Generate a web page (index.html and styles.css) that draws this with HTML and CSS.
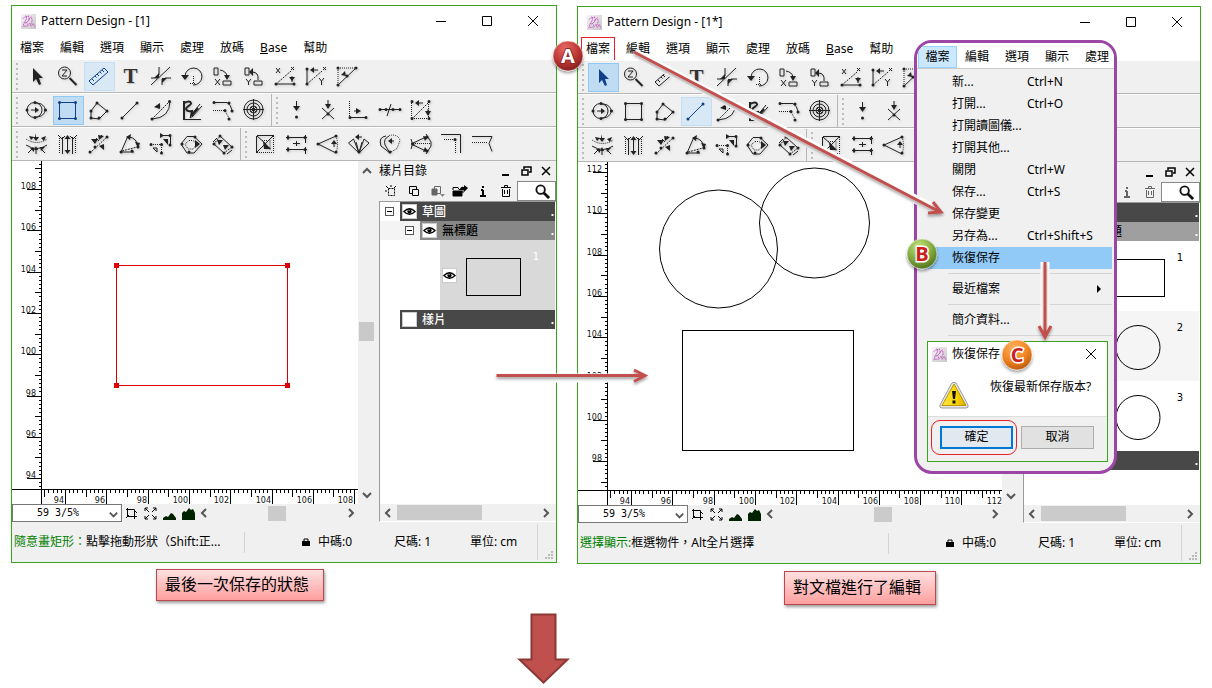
FILE: index.html
```html
<!DOCTYPE html>
<html lang="zh-Hant">
<head>
<meta charset="utf-8">
<title>Pattern Design</title>
<link rel="stylesheet" href="styles.css">
</head>
<body>
<svg class="defs" aria-hidden="true">
  <defs>
    <linearGradient id="g-app" x1="0" y1="0" x2="1" y2="1"><stop offset="0" stop-color="#f6f4f6"/><stop offset="1" stop-color="#c9c6ca"/></linearGradient>
    <radialGradient id="g-red" cx=".4" cy=".25" r=".8"><stop offset="0" stop-color="#e86a64"/><stop offset=".6" stop-color="#b83432"/><stop offset="1" stop-color="#7d1d1c"/></radialGradient>
    <radialGradient id="g-green" cx=".4" cy=".25" r=".8"><stop offset="0" stop-color="#c3e27a"/><stop offset=".6" stop-color="#7da53a"/><stop offset="1" stop-color="#4b6b1c"/></radialGradient>
    <radialGradient id="g-orange" cx=".4" cy=".25" r=".8"><stop offset="0" stop-color="#ffb15c"/><stop offset=".6" stop-color="#f0821f"/><stop offset="1" stop-color="#b4550c"/></radialGradient>
    <linearGradient id="g-warn" x1="0" y1="0" x2="1" y2="0"><stop offset="0" stop-color="#ffe84a"/><stop offset=".6" stop-color="#fbd500"/><stop offset="1" stop-color="#d9a800"/></linearGradient>
    <filter id="soft" x="-30%" y="-30%" width="160%" height="170%"><feDropShadow dx="0" dy="2" stdDeviation="1.5" flood-opacity=".4"/></filter>
  </defs>
  <symbol id="app" viewBox="0 0 16 16"><rect width="16" height="16" fill="url(#g-app)"/><path d="M2 5l3-3 1 3-3 5-1 4M5 3l3-1 1 4-3 3 2 4M4 10l3-2M8 6l3-3 1 4-2 5M9 10l2 3 2-3 2 4M3 13h4" stroke="#c653c4" fill="none" stroke-dasharray="2 .7"/></symbol>

  <symbol id="cursor" viewBox="0 0 24 24"><path class="f" d="M8 4v14l3-3 3 6 2-1-2-6h4z"/></symbol>
  <symbol id="zoom" viewBox="0 0 24 24"><circle cx="8.500" cy="9" r="6"/><path d="M6 6h5l-5 6h5"/><path class="w" d="M13.500 14l7 7"/></symbol>
  <symbol id="ruler" viewBox="0 0 24 24"><path d="M2 17L17 4l4 4L6 21zM5 15l2 2M8 12l1.500 1.500M10 10l2 2M13 8l1.500 1.500M15 6l2 2"/></symbol>
  <symbol id="cross" viewBox="0 0 24 24"><path d="M2 21L21 3M2 14h6M10 3v8M13 21v-6M16 14h6"/><path class="f" d="M5 14l5-5v5zM13 19v-5h5z"/></symbol>
  <symbol id="rotate" viewBox="0 0 24 24"><path d="M5 12a8.500 8.500 0 1 1 8 9"/><path class="f" d="M1 11h8l-4 5z"/><path class="d" d="M13.500 12v8M10 19.500h5"/></symbol>
  <symbol id="movex" viewBox="0 0 24 24"><path d="M3 4h4v7H3zM12 17h8v4h-8zM9 6q6 1 7 6"/><path class="f" d="M13 11h6l-3 5z"/><path d="M4 15l5 6M9 15l-5 6"/></symbol>
  <symbol id="movey" viewBox="0 0 24 24"><path d="M3 4h4v7H3zM12 17h8v4h-8zM16 16q1-8-6-8"/><path class="f" d="M7 8l4-4v8z"/><path d="M4 15l2.500 3 2.500-3M6.500 18v3"/></symbol>
  <symbol id="measx" viewBox="0 0 24 24"><path d="M3 20h18M19 12v6M3 4l4 5M7 4l-4 5M18 3l3 3M21 3l-3 3"/><path class="f" d="M16 13h6l-3 4z"/><path class="d2" d="M3 20L18 7"/><path class="p" d="M3 20h0M21 20h0"/></symbol>
  <symbol id="measy" viewBox="0 0 24 24"><path d="M3 5v15M15 14l2.500 3 2.500-3M17.500 17v4M8 6h6M19 3l3 3M22 3l-3 3"/><path class="f" d="M6 6l4-3v6z"/><path class="d2" d="M3 20L18 7"/><path class="p" d="M3 5h0M3 20h0"/></symbol>
  <symbol id="measd" viewBox="0 0 24 24"><path d="M3 21L21 4"/><path class="d" d="M3 4h18M3 4v17"/><path class="f" d="M11 12l-5-1 4-4z"/><path class="p" d="M3 4h0M21 4h0M3 21h0M12 12h0"/></symbol>

  <symbol id="ellipse" viewBox="0 0 24 24"><circle cx="9.500" cy="12" r="7.500"/><path d="M11 5c12 0 12 14 0 14M6 12h6"/><path class="f" d="M10 9l4 3-4 3z"/><path class="p" d="M2 12h0M10 4.500h0M10 19.500h0M20.500 12h0"/></symbol>
  <symbol id="rect" viewBox="0 0 24 24"><path d="M3.500 4.500h16v16h-16z"/><path class="p" d="M3.500 4.500h0M19.500 4.500h0M19.500 20.500h0M3.500 20.500h0"/></symbol>
  <symbol id="poly" viewBox="0 0 24 24"><path d="M10 5l10 8-8 8-8-1v-7z"/><path class="p" d="M10 5h0M20 13h0M12 20h0M4 20h0M4 13h0"/></symbol>
  <symbol id="line" viewBox="0 0 24 24"><path d="M4 20L19 5"/><path class="p" d="M4 20h0M19 5h0"/></symbol>
  <symbol id="curve" viewBox="0 0 24 24"><path d="M3 21q18-1 18-18"/><path class="d2" d="M3 21L20 4"/><path class="f" d="M5 9l6-4v6z"/><path class="p" d="M3 21h0M20.500 3.500h0"/></symbol>
  <symbol id="pen" viewBox="0 0 24 24"><path class="w" d="M4 3v18"/><path d="M3 21.500h18"/><path class="w" d="M4 5q6-3 7 0c1 2-5 3-5 6q1 3 6 2l-1 5"/><path d="M20 6l-9 11M22 8L12 19M10 20l1-3 2 1z"/><path class="w" d="M18 10l-6 7"/></symbol>
  <symbol id="arc" viewBox="0 0 24 24"><path d="M3 4.500h13q4 2 5 8"/><path class="d" d="M2 12.500h12M14 13l4 7"/><path class="p" d="M3 4.500h0M18 5h0M21 13h0M14 12.500h0M18 21h0"/></symbol>
  <symbol id="target" viewBox="0 0 24 24"><circle cx="11.500" cy="11.500" r="9.500"/><circle cx="11.500" cy="11.500" r="6.500"/><circle cx="11.500" cy="11.500" r="3.500"/><path d="M11.500 1v21M1 11.500h21M9 9l5 5M14 9l-5 5"/></symbol>
  <symbol id="point" viewBox="0 0 24 24"><path d="M11.500 3v7"/><path class="f" d="M8 8h7l-3.500 5z"/><path class="p" d="M11.500 19h0"/></symbol>
  <symbol id="pointx" viewBox="0 0 24 24"><path d="M12 2v6M6 10l12 11M18 10L6 21"/><path class="f" d="M9 6h6l-3 5z"/><path class="p" d="M12 16h0"/></symbol>
  <symbol id="perp" viewBox="0 0 24 24"><path d="M3 19.500h17M7 13h4"/><path class="d" d="M2.500 3v16"/><path class="f" d="M9 10l5 3-5 3z"/><path class="p" d="M3 19.500h0M19 19.500h0"/></symbol>
  <symbol id="divide" viewBox="0 0 24 24"><path d="M2 11.500h20M9 18l4-12"/><path class="p" d="M2 11.500h0M8 11.500h0M15 11.500h0M22 11.500h0"/></symbol>
  <symbol id="align" viewBox="0 0 24 24"><path class="d" d="M2.500 3v17.500h17V4"/><path class="d2" d="M3 21L20 4"/><path d="M8 5h6M19 11v5"/><path class="f" d="M6 5l4-3v6zM16 13h6l-3 5z"/><path class="p" d="M3 3.500h0M20 3.500h0M3 20.500h0M20 20.500h0"/></symbol>

  <symbol id="seam" viewBox="0 0 24 24"><path d="M1 13q11 7 21 0M3 21l5-5M11 22v-6M20 21l-4-4"/><path class="d" d="M1 7q11 7 21 0"/><path class="f" d="M4 4l5 1-3 3zM11 1v4h3l-3 4-3-4h2zM21 4l-5 2 3 3zM5 16h4v4zM9 18h4l-2-4zM15 15h5l-4 4z"/></symbol>
  <symbol id="parallel" viewBox="0 0 24 24"><path d="M6.500 5v17M16.500 5v17M11.500 5v15M2 3l4 4M6 7l3-3M21 3l-4 4M17 7l-3-3"/><path class="f" d="M8.500 7l3-4 3 4zM8.500 18l3 4 3-4z"/><path class="d" d="M3.500 6v16M19.500 6v16"/></symbol>
  <symbol id="scatter" viewBox="0 0 24 24"><path class="d2" d="M3 21L21 4"/><path d="M9 6l3 3M14 3l2 2"/><path class="f" d="M4 7h7l-3 5zM11 3l6 1-5 4zM12 14l5-2v6z"/><path class="p" d="M3 20h0M8 15h0M20 5h0"/></symbol>
  <symbol id="angle" viewBox="0 0 24 24"><path d="M10 4L3 20h13M11 5q8 1 9 10"/><path class="d2" d="M4 19l15-4"/><path class="f" d="M8 5l5-3-1 6zM17 10l5 1-2 5z"/><path class="p" d="M3 20h0M20 15h0M14 19h0"/></symbol>
  <symbol id="steps" viewBox="0 0 24 24"><path d="M11 3.500h10.500V13"/><path class="d" d="M2 12.500h11M12.500 13v8"/><path class="f" d="M14 7h5v6zM11 1l4 2.500L11 6z"/><path d="M4 16h4v4z"/><path class="p" d="M2 12.500h0M12.500 12.500h0M21 3.500h0M12.500 21h0M21 13h0"/></symbol>
  <symbol id="offset" viewBox="0 0 24 24"><path d="M7 4.500h7l8 7.500-8 9H7l-6-9z"/><path class="d" d="M9 8.500h4l4 3.500-4 5H8l-3-5z"/><path class="f" d="M15 8l5 4-5 4z"/><path class="p" d="M9 20h0M15 5h0M2 12h0"/></symbol>
  <symbol id="band" viewBox="0 0 24 24"><path d="M9 4l12 11M3 12l10 9M6 6l-4 4M21 18l-5 4"/><path class="d2" d="M9 4l-6 8M21 15l-8 6"/><path class="f" d="M6 8l6 0-4 5zM12 13h6l-4 5z"/><path class="p" d="M9 4h0M21 15h0M3 12h0M13 21h0"/></symbol>
  <symbol id="boxcut" viewBox="0 0 24 24"><path d="M3 3.500h16M3 20L20 3M3 4l9 8M2.500 4v17"/><path class="d" d="M3 20.500h16.500V4M8 8.500h8V18"/><path class="f" d="M9 9l8 8h-7z"/></symbol>
  <symbol id="widen" viewBox="0 0 24 24"><path d="M1 5.500h21M1 17.500h21M3 3v5M20.500 3v8M3 15v5M20.500 15v7M8 11.500h7M11.500 9v5"/><path class="p" d="M3 5.500h0M20 5.500h0M3 17.500h0M20 17.500h0"/></symbol>
  <symbol id="dart" viewBox="0 0 24 24"><path d="M2 12L20 4M2 12l18 9M18 9v6"/><path class="d" d="M20 4q3 8 0 17"/><path class="f" d="M15 12l3-4 3 4z"/><path class="p" d="M2 12h0M20 4h0M20 20h0"/></symbol>
  <symbol id="fan" viewBox="0 0 24 24"><path d="M12 21L1.500 11l5-4zM12 21l10-10-5-4zM9 10l3 11 3-11M10 5h5"/><path class="f" d="M8 5l4-3v6z"/><path class="p" d="M12 20h0"/></symbol>
  <symbol id="pleat" viewBox="0 0 24 24"><path d="M12 21L3 14q-3-9 5-10M12 21L7 13q-2-6 4-9M12 9h4"/><path class="d" d="M11 3.500q9-2 11 5l-3 8-7 4"/><path class="f" d="M10 9l4-3v6z"/><path class="p" d="M12 20h0"/></symbol>
  <symbol id="spread" viewBox="0 0 24 24"><path d="M2 12L17 5M2 12l15 7M2 7q3 5 0 10M17 2l5 8v4l-5 8"/><path class="d" d="M2 11.500h19"/><path class="f" d="M14 4l5 1-3 4zM14 20l5-1-3-4z"/><path class="p" d="M18 5h0M18 19h0M4 12h0"/></symbol>
  <symbol id="corner" viewBox="0 0 24 24"><path d="M1 2.500h19.500V21"/><path class="d" d="M4 7.500h11.500V21"/><path class="p" d="M15 7.500h0"/></symbol>
  <symbol id="notch" viewBox="0 0 24 24"><path d="M1 4.500h20l-3 7 3 8"/><path class="d" d="M1 10.500h15"/></symbol>

  <symbol id="eye" viewBox="0 0 14 14"><path d="M1 7q6-6 12 0q-6 6-12 0z" fill="#fff" stroke="#000" stroke-width="1.400"/><circle cx="7" cy="7" r="2.300" fill="#000"/><path d="M6 6h1" stroke="#fff"/></symbol>
  <symbol id="lens" viewBox="0 0 16 16"><circle cx="6" cy="6" r="4.500" fill="none" stroke="#111" stroke-width="2"/><path d="M9 9l6 6" stroke="#111" stroke-width="3"/></symbol>
  <symbol id="close" viewBox="0 0 12 12"><path d="M1 1l10 10M11 1L1 11"/></symbol>
  <symbol id="chev" viewBox="0 0 12 12"><path d="M8 2L4 6l4 4" stroke-width="2"/></symbol>
</svg>

<main class="stage">
  <div class="pair">
    <div class="column">
      <section class="window" aria-label="Pattern Design - [1]">
        <header class="titlebar">
          <svg class="app-icon"><use href="#app"/></svg><h1>Pattern Design - [1]</h1>
          <div class="win-controls">
            <button aria-label="最小化"><svg viewBox="0 0 12 12"><path d="M1 6.500h10"/></svg></button>
            <button aria-label="最大化"><svg viewBox="0 0 12 12"><path d="M1.500 1.500h9v9h-9z"/></svg></button>
            <button aria-label="關閉"><svg><use href="#close"/></svg></button>
          </div>
        </header>
        <nav class="menubar"><button>檔案</button><button>編輯</button><button>選項</button><button>顯示</button><button>處理</button><button>放碼</button><button><u>B</u>ase</button><button>幫助</button></nav>
        <div class="toolbars" data-soft="ruler" data-on="rect"></div>
        <div class="body">
          <div class="work">
            <svg class="canvas" data-vbase="28" data-vvalue="108" data-hvalue="94">
              <g stroke="#d90000" fill="none"><rect x="104.500" y="104.500" width="171" height="120"/></g>
              <g fill="#e00000"><rect x="102" y="102" width="5" height="5"/><rect x="273" y="102" width="5" height="5"/><rect x="102" y="222" width="5" height="5"/><rect x="273" y="222" width="5" height="5"/></g>
            </svg>
            <div class="vscroll"><svg class="up"><use href="#chev"/></svg><div class="track"><i></i></div><svg class="down"><use href="#chev"/></svg></div>
            <div class="viewbar" data-thumb="43"></div>
          </div>
          <aside class="panel">
            <div class="panel-title"><h2>樣片目錄</h2><span class="panel-controls"></span></div>
            <div class="panel-tools"></div>
            <div class="tree">
              <div class="row dark"><span class="fold"></span><div class="bar"><svg class="eye"><use href="#eye"/></svg><b>草圖</b><i>.</i></div></div>
              <div class="row mid indent"><span class="fold"></span><div class="bar"><svg class="eye"><use href="#eye"/></svg><b>無標題</b><i>.</i></div></div>
              <div class="item picked"><svg class="eye"><use href="#eye"/></svg><svg class="thumb" viewBox="0 0 56 48"><rect x=".5" y="5.500" width="54" height="37"/></svg><span>1</span></div>
              <div class="row dark"><span class="nofold"></span><div class="bar"><span class="eye"></span><b>樣片</b><i>.</i></div></div>
            </div>
            <div class="hscroll"><svg><use href="#chev"/></svg><div class="track"><i class="wide"></i></div><svg class="flip"><use href="#chev"/></svg></div>
          </aside>
        </div>
        <footer class="status">
          <p><em>隨意畫矩形：</em>點擊拖動形狀（Shift:正...</p>
          <div class="cells"><svg class="lock" viewBox="0 0 8 8"><path d="M0 3h8v5H0z"/><path d="M2 4V1h4v3" fill="none" stroke="#000"/></svg><span>中碼:0</span><span>尺碼: 1</span><span>單位: cm</span><i class="size-grip"></i></div>
        </footer>
      </section>
      <p class="caption first">最後一次保存的狀態</p>
    </div>

    <div class="column second">
      <section class="window" aria-label="Pattern Design - [1*]">
        <header class="titlebar">
          <svg class="app-icon"><use href="#app"/></svg><h1>Pattern Design - [1*]</h1>
          <div class="win-controls">
            <button aria-label="最小化"><svg viewBox="0 0 12 12"><path d="M1 6.500h10"/></svg></button>
            <button aria-label="最大化"><svg viewBox="0 0 12 12"><path d="M1.500 1.500h9v9h-9z"/></svg></button>
            <button aria-label="關閉"><svg><use href="#close"/></svg></button>
          </div>
        </header>
        <nav class="menubar"><button class="ringed">檔案</button><button>編輯</button><button>選項</button><button>顯示</button><button>處理</button><button>放碼</button><button><u>B</u>ase</button><button>幫助</button></nav>
        <div class="toolbars" data-soft="line" data-on="cursor"></div>
        <div class="body">
          <div class="work">
            <svg class="canvas" data-vbase="10" data-vvalue="112" data-hvalue="94">
              <g stroke="#000" fill="none"><rect x="104.500" y="168.500" width="171" height="120"/><circle cx="140.500" cy="87" r="59"/><circle cx="236.500" cy="61" r="55"/></g>
            </svg>
            <div class="vscroll"><svg class="up"><use href="#chev"/></svg><div class="track"><i></i></div><svg class="down"><use href="#chev"/></svg></div>
            <div class="viewbar" data-thumb="46"></div>
          </div>
          <aside class="panel faded">
            <div class="panel-title"><h2>樣片目錄</h2><span class="panel-controls"></span></div>
            <div class="panel-tools"></div>
            <div class="tree">
              <div class="row dark"><span class="fold"></span><div class="bar"><svg class="eye"><use href="#eye"/></svg><b>草圖</b><i>.</i></div></div>
              <div class="row mid indent"><span class="fold"></span><div class="bar"><svg class="eye"><use href="#eye"/></svg><b>無標題</b><i>.</i></div></div>
              <div class="item"><svg class="eye"><use href="#eye"/></svg><svg class="thumb" viewBox="0 0 56 48"><rect x=".5" y="5.500" width="54" height="37"/></svg><span>1</span></div>
              <div class="item even"><svg class="eye"><use href="#eye"/></svg><svg class="thumb" viewBox="0 0 56 48"><circle cx="28" cy="23.500" r="22"/></svg><span>2</span></div>
              <div class="item"><svg class="eye"><use href="#eye"/></svg><svg class="thumb" viewBox="0 0 56 48"><circle cx="28" cy="23.500" r="22"/></svg><span>3</span></div>
              <div class="row dark"><span class="nofold"></span><div class="bar"><span class="eye"></span><b>樣片</b><i>.</i></div></div>
            </div>
            <div class="hscroll"><svg><use href="#chev"/></svg><div class="track"><i class="wide"></i></div><svg class="flip"><use href="#chev"/></svg></div>
          </aside>
        </div>
        <footer class="status">
          <p><em>選擇顯示:</em>框選物件，Alt全片選擇</p>
          <div class="cells"><svg class="lock" viewBox="0 0 8 8"><path d="M0 3h8v5H0z"/><path d="M2 4V1h4v3" fill="none" stroke="#000"/></svg><span>中碼:0</span><span>尺碼: 1</span><span>單位: cm</span><i class="size-grip"></i></div>
        </footer>

        <div class="popup">
          <nav class="popup-bar"><button class="open">檔案</button><button>編輯</button><button>選項</button><button>顯示</button><button>處理</button></nav>
          <ul class="menu">
            <li><button><span>新...</span><kbd>Ctrl+N</kbd></button></li>
            <li><button><span>打開...</span><kbd>Ctrl+O</kbd></button></li>
            <li><button><span>打開讀圖儀...</span></button></li>
            <li><button><span>打開其他...</span></button></li>
            <li><button><span>關閉</span><kbd>Ctrl+W</kbd></button></li>
            <li><button><span>保存...</span><kbd>Ctrl+S</kbd></button></li>
            <li><button><span>保存變更</span></button></li>
            <li><button><span>另存為...</span><kbd>Ctrl+Shift+S</kbd></button></li>
            <li><button class="hot"><span>恢復保存</span></button></li>
            <li class="rule"></li>
            <li><button><span>最近檔案</span><svg class="more" viewBox="0 0 4 8"><path d="M0 0l4 4-4 4z"/></svg></button></li>
            <li class="rule"></li>
            <li><button><span>簡介資料...</span></button></li>
            <li class="rule"></li>
          </ul>
          <div class="dialog" role="dialog" aria-label="恢復保存">
            <header><svg class="app-icon"><use href="#app"/></svg><h2>恢復保存</h2><button aria-label="關閉"><svg><use href="#close"/></svg></button></header>
            <div class="message">
              <svg class="warn" viewBox="0 0 32 30"><path d="M15 2.500h2q1 0 2 2L30 25q1 3-2 3H4q-3 0-2-3L13 4.500q1-2 2-2z" fill="#e8e8e8" stroke="#9a9a9a"/><path d="M16 4l12 21.500H4z" fill="url(#g-warn)" stroke="#b89500"/><path d="M14 11h4l-1 8h-2zM14.500 20.500h3v3h-3z" fill="#111"/></svg>
              <p>恢復最新保存版本?</p>
            </div>
            <div class="actions"><span class="ring"><button class="primary">確定</button></span><button>取消</button></div>
          </div>
        </div>
      </section>
      <p class="caption last">對文檔進行了編輯</p>
    </div>
  </div>
  <svg class="down-arrow" viewBox="0 0 54 72" aria-hidden="true"><path d="M14.500 1.500h24v45h12L26.500 69.500 2.500 46.500h12z" fill="#c0504d" stroke="#8c3836" stroke-width="2"/></svg>

  <svg class="notes">
    <g fill="none" stroke="#fff" stroke-width="9"><path d="M496 378h151"/><path d="M634 53l304 158"/><path d="M1045 262v70"/></g>
    <g fill="none" stroke="#c0504d" stroke-width="3" filter="url(#soft)">
      <path d="M496.500 375.500h148M634 370l11 5.500-11 6"/>
      <path d="M634 52l306 160M928 213l13-1-8-10"/>
      <path d="M1045 262v74M1039 326l6 11 6-11"/>
    </g>
    <g class="badge" filter="url(#soft)">
      <circle cx="568" cy="56" r="15" fill="url(#g-red)"/><circle cx="922" cy="254" r="15" fill="url(#g-green)"/><circle cx="1017" cy="355" r="15" fill="url(#g-orange)"/>
    </g>
    <g class="badge-text"><text x="568" y="63" class="light">A</text><text x="922" y="261">B</text><text x="1017" y="362">C</text></g>
  </svg>
</main>
<script src="app.js"></script>
</body>
</html>
```
FILE: styles.css
```css
* { box-sizing: border-box; }
body {
  margin: 0;
  background: #fff;
  color: #000;
  font: 12px/18px "Noto Sans", "Noto Sans CJK TC", sans-serif;
}
h1, h2, p, ul { margin: 0; padding: 0; font-size: 12px; font-weight: 400; }
button { border: 0; background: none; padding: 0; margin: 0; color: inherit; font: inherit; }
svg { display: block; fill: none; stroke: none; }
.defs { position: absolute; width: 0; height: 0; }

.stage { position: relative; padding: 5px 11px 0; }
.pair { display: grid; grid-template-columns: 546fr 624fr; gap: 20px; align-items: start; }
.second { padding-top: 1px; }
.window {
  position: relative;
  display: flex;
  flex-direction: column;
  border: 1px solid #3aa51c;
  background: #f0f0f0;
}

.titlebar { display: flex; align-items: center; height: 30px; padding-left: 9px; background: #fff; }
.app-icon { width: 15px; height: 15px; margin-right: 5px; }
.titlebar h1 { flex: 1; }
.win-controls { display: flex; }
.win-controls button { width: 46px; height: 28px; display: grid; place-items: center; }
.win-controls svg { width: 12px; height: 12px; stroke: #000; }
.menubar { display: flex; gap: 16px; height: 23px; padding: 0 8px; align-items: center; background: #fff; }
.ringed { outline: 1px solid #e8202a; outline-offset: 2px; margin: 0 -2px; padding: 0 2px; }

.toolrow { display: flex; height: 34px; border-top: 1px solid #fff; border-bottom: 1px solid #b6b6b6; overflow: hidden; }
.toolgroup { display: flex; align-items: center; padding-right: 1px; }
.toolgroup + .toolgroup { border-left: 1px solid #b6b6b6; }
.grip {
  width: 2px;
  height: 27px;
  margin: 0 4px;
  background: linear-gradient(#bdbdbd, #bdbdbd) 0 0 / 2px 2px;
  background: repeating-linear-gradient(#bdbdbd 0 2px, transparent 2px 5px);
}
.tool { flex: none; width: 31px; height: 29px; display: grid; place-items: center; border: 1px solid transparent; }
.tool svg { width: 24px; height: 24px; margin: 0 1px 1px 0; stroke: #222; color: #222; filter: drop-shadow(1px 1px 1px #c4c4c4); }
.tool.soft { background: #d9e8f5; border-color: #c3def5; }
.tool.on { background: #c0dcf3; border-color: #90c8f6; }
.tool.soft svg, .tool.on svg { stroke: #123f8c; color: #123f8c; filter: none; }
.f { fill: currentColor; stroke: none; }
.w { stroke-width: 2; }
.d { stroke-dasharray: 1 1; }
.d2 { stroke-dasharray: 2 1; }
.p { stroke-width: 3; stroke-linecap: round; }
.letter { font: 700 21px/24px "Liberation Serif", serif; color: #333; text-shadow: 1px 1px 1px #c4c4c4; }

.body { display: flex; }
.work { flex: 1; min-width: 0; display: grid; grid-template: minmax(343px, 1fr) 18px / minmax(0, 1fr) 17px; }
.canvas { width: 100%; height: 100%; background: #fff; }
.ticks { stroke: #000; shape-rendering: crispEdges; }
.nums { font: 8px "DejaVu Sans", sans-serif; fill: #111; text-anchor: end; }
.vscroll { display: flex; flex-direction: column; align-items: center; padding: 4px 0 3px; }
.vscroll svg, .hscroll svg { width: 12px; height: 12px; stroke: #555; flex: none; }
.vscroll .up { transform: rotate(90deg); }
.vscroll .down { transform: rotate(-90deg); }
.vscroll .track { flex: 1; width: 15px; }
.vscroll i { display: block; height: 19px; margin-top: 145px; background: #c9c9c9; }
.viewbar { grid-column: 1 / 3; display: flex; align-items: center; padding-right: 18px; }
.viewbar .combo { position: relative; width: 110px; height: 18px; }
.combo select {
  appearance: none;
  display: block;
  width: 100%;
  height: 18px;
  padding: 0 0 0 24px;
  border: 1px solid #777;
  border-radius: 0;
  background: #fff;
  color: #000;
  font: 10px/16px "DejaVu Sans Mono", monospace;
}
.combo svg { position: absolute; right: 3px; top: 5px; width: 11px; height: 11px; stroke: #555; transform: rotate(-90deg); }
.view-icon { width: 19px; height: 14px; display: grid; place-items: center; }
.view-icon svg { width: 13px; height: 13px; stroke: #000; }
.hscroll { flex: 1; display: flex; align-items: center; height: 17px; }
.hscroll .track { flex: 1; height: 15px; margin: 0 3px; }
.hscroll i { display: block; width: 18px; height: 15px; background: #cbcbcb; }
.hscroll i.wide { width: 85px; }
.flip { transform: rotate(180deg); }

.panel { flex: none; width: 181px; display: flex; flex-direction: column; padding-left: 4px; }
.panel-title { display: flex; align-items: center; justify-content: space-between; height: 20px; padding-right: 4px; }
.panel-controls { display: flex; gap: 8px; }
.panel-controls button { width: 12px; height: 12px; }
.panel-controls svg { width: 12px; height: 12px; stroke: #000; stroke-width: 2; }
.panel-tools { display: flex; align-items: center; height: 20px; padding-left: 1px; }
.panel-tools button { width: 23px; display: grid; place-items: center; }
.panel-tools svg { width: 16px; height: 12px; stroke: #000; }
.faded .panel-tools button svg { stroke: #666; }
.search { margin-left: auto; width: 39px; height: 20px; display: flex; align-items: center; border: 1px solid #888; background: #fff; }
.search input { width: 17px; height: 16px; padding: 0; border: 0; background: none; outline: 0; }
.panel-tools .search svg { width: 15px; height: 15px; }
.tree { flex: 1; border-top: 1px solid #999; border-left: 1px solid #999; padding-right: 1px; background: #fff; }
.row { display: flex; align-items: center; height: 19px; }
.indent { padding-left: 20px; background: #f4f4f4; }
.fold { width: 9px; height: 9px; margin: 0 6px 0 5px; border: 1px solid #555; background: linear-gradient(#000, #000) center / 5px 1px no-repeat #fff; }
.nofold { width: 20px; }
.bar { flex: 1; display: flex; align-items: center; height: 19px; padding-left: 2px; }
.bar b { flex: 1; margin-left: 5px; font-weight: 500; }
.bar i { margin-right: 1px; font-style: normal; font-weight: 700; color: #fff; }
.dark .bar { background: #484848; color: #fff; }
.mid .bar { background: #888; }
.faded .mid .bar { background: #9f9f9f; }
.eye { flex: none; width: 15px; height: 15px; background: #fff; border: 1px solid #ccc; }
.item { display: flex; align-items: center; height: 70px; margin-left: 60px; padding: 0 16px 0 2px; }
.picked { background: #d9d9d9; color: #fff; }
.even { background: #f5f5f5; }
.thumb { width: 56px; height: 48px; margin: 4px 0 0 9px; stroke: #000; }
.item span { margin: 0 0 36px auto; font: 10px/14px "DejaVu Sans", sans-serif; }
.panel .hscroll { flex: none; border-left: 1px solid #999; height: 18px; padding: 0 4px 0 2px; border-bottom: 1px solid #fff; }

.status { display: flex; align-items: center; height: 40px; }
.status p { flex: 1; padding-left: 2px; white-space: nowrap; overflow: hidden; font-family: "Noto Sans", "Noto Sans CJK SC", sans-serif; }
.status em { color: #008000; font-style: normal; }
.cells { display: flex; align-items: center; width: 312px; height: 21px; padding-left: 57px; border-left: 1px solid #d4d4d4; }
.cells span { width: 76px; white-space: nowrap; }
.cells span:nth-of-type(3) { width: 67px; }
.lock { width: 8px; height: 8px; margin-right: 8px; fill: #000; }
.size-grip {
  width: 19px;
  height: 36px;
  border-left: 1px solid #d4d4d4;
  background:
    linear-gradient(#bbb, #bbb) 7px 33px / 2px 2px no-repeat,
    linear-gradient(#bbb, #bbb) 10px 33px / 2px 2px no-repeat,
    linear-gradient(#bbb, #bbb) 13px 33px / 2px 2px no-repeat,
    linear-gradient(#bbb, #bbb) 10px 30px / 2px 2px no-repeat,
    linear-gradient(#bbb, #bbb) 13px 30px / 2px 2px no-repeat,
    linear-gradient(#bbb, #bbb) 13px 27px / 2px 2px no-repeat;
}

.caption {
  width: max-content;
  padding: 0 14px 4px 8px;
  border: 1px solid #b9474b;
  background: linear-gradient(#ffe0e0, #ff9f9f);
  box-shadow: 1px 2px 3px rgba(0, 0, 0, .4);
  font: 16px/26px "Noto Sans CJK TC", sans-serif;
}
.first { margin: 6px 0 0 145px; }
.last { margin: 7px 0 0 207px; line-height: 28px; }
.down-arrow { width: 54px; height: 72px; margin: 8px 0 0 506px; }

.popup {
  position: absolute;
  top: 33px;
  right: 83px;
  width: 203px;
  padding-bottom: 9px;
  overflow: hidden;
  border: 3px solid #9b45a5;
  border-radius: 18px;
  background: #f0f0f0;
}
.popup-bar { display: flex; height: 26px; padding: 3px 0 0 1px; border-bottom: 1px solid #ccc; background: #fff; }
.popup-bar button { flex: none; width: 40px; height: 22px; line-height: 20px; }
.popup-bar .open { width: 39px; border: 1px solid #99d1ff; background: #cce8ff; }
.menu { list-style: none; padding: 2px 2px 0 2px; }
.menu button { display: grid; grid-template-columns: 75px 1fr; align-items: center; width: 100%; height: 22px; padding-left: 33px; text-align: left; white-space: nowrap; }
.menu kbd { font: inherit; }
.menu .hot { background: #91c9f7; }
.more { width: 4px; height: 8px; fill: #000; justify-self: end; margin-right: 11px; }
.rule { height: 1px; margin: 4px 0 4px 29px; background: #d4d4d4; }
.dialog { width: 181px; margin: 5px 0 0 10px; border: 1px solid #3aa51c; background: #fff; }
.dialog header { display: flex; align-items: center; height: 24px; padding: 0 10px 0 4px; }
.dialog h2 { flex: 1; }
.dialog header button svg { width: 12px; height: 12px; stroke: #000; }
.message { display: flex; height: 50px; padding-left: 10px; }
.warn { width: 32px; height: 30px; margin-top: 14px; }
.message p { margin: 12px 0 0 20px; }
.actions { display: flex; align-items: center; gap: 4px; height: 45px; padding: 0 0 4px 3px; border-top: 1px solid #dfdfdf; background: #f0f0f0; }
.ring { padding: 5px 3px 5px 8px; border: 1px solid #e8202a; border-radius: 9px; }
.actions button { display: block; width: 73px; height: 23px; border: 1px solid #adadad; background: #e1e1e1; line-height: 20px; }
.actions .primary { border: 2px solid #0078d7; background: #e1e8f0; line-height: 18px; }

.notes { position: absolute; inset: 0; width: 100%; height: 100%; pointer-events: none; }
.badge circle { stroke: #fff; stroke-opacity: .5; }
.badge-text { font: 700 20px "Open Sans", sans-serif; text-anchor: middle; fill: #c8201c; stroke: #fff; stroke-width: 3px; paint-order: stroke; }
.badge-text .light { fill: #fff; stroke: #8c2a28; stroke-width: 2px; }
```
FILE: app.js
```js
const ROWS = [
  [['cursor', 'zoom', 'ruler', 'text', 'cross', 'rotate', 'movex', 'movey', 'measx', 'measy', 'measd']],
  [['ellipse', 'rect', 'poly', 'line', 'curve', 'pen', 'arc', 'target'], ['point', 'pointx', 'perp', 'divide', 'align']],
  [['seam', 'parallel', 'scatter', 'angle', 'steps', 'offset', 'band'], ['boxcut', 'widen', 'dart', 'fan', 'pleat', 'spread', 'corner', 'notch']]
];

document.querySelectorAll('.toolbars').forEach(bar => {
  const { soft, on } = bar.dataset;
  const tool = id => {
    const state = id === soft ? ' soft' : id === on ? ' on' : '';
    const art = id === 'text' ? '<span class="letter">T</span>' : `<svg><use href="#${id}"/></svg>`;
    return `<button class="tool${state}" aria-label="${id}">${art}</button>`;
  };
  bar.innerHTML = ROWS.map(groups => '<div class="toolrow">' + groups.map(ids =>
    '<div class="toolgroup"><i class="grip"></i>' + ids.map(tool).join('') + '</div>').join('') + '</div>').join('');
});

document.querySelectorAll('.viewbar').forEach(bar => {
  bar.innerHTML = `
    <div class="combo"><select aria-label="縮放"><option>59 3/5%</option></select><svg><use href="#chev"/></svg></div>
    <button class="view-icon" aria-label="範圍"><svg viewBox="0 0 13 13"><path d="M2.500 1v8.500H12M1 2.500h8.500V12M1 11l3-3M9 3l3 3"/></svg></button>
    <button class="view-icon" aria-label="全部"><svg viewBox="0 0 13 13"><path d="M5 5L1 1v3M1 1h3M8 5l4-4v3M12 1H9M5 8l-4 4V9M1 12h3M8 8l4 4V9M12 12H9"/></svg></button>
    <button class="view-icon" aria-label="縮小"><svg viewBox="0 0 13 13"><path fill="#020" stroke="none" d="M0 13v-2l3-2 2 1 3-4 2 1 3 4v2z"/></svg></button>
    <button class="view-icon" aria-label="放大"><svg viewBox="0 0 13 13"><path fill="#020" stroke="none" d="M0 13V6l2-2 2 1 3-4 2 2 2-1 2 4v7z"/></svg></button>
    <div class="hscroll"><svg><use href="#chev"/></svg><div class="track"><i style="margin-left:${bar.dataset.thumb}%"></i></div><svg class="flip"><use href="#chev"/></svg></div>`;
});

document.querySelectorAll('.panel-controls').forEach(box => {
  box.innerHTML = `
    <button aria-label="最小化"><svg viewBox="0 0 12 12"><path d="M2 10h7"/></svg></button>
    <button aria-label="還原"><svg viewBox="0 0 12 12"><path stroke-width="1.5" d="M4 4V2h7v5H9M2 5h6v5H2z"/></svg></button>
    <button aria-label="關閉"><svg viewBox="0 0 12 12"><path stroke-width="1.5" d="M2 2l8 8M10 2l-8 8"/></svg></button>`;
});

document.querySelectorAll('.panel-tools').forEach(box => {
  const icons = [
    ['新增', '<path stroke-dasharray="2 1" d="M5.500 3.500h6v7h-6z"/><path d="M3 1l2 2M8 0v2M13 1l-2 2M2 6h2"/>'],
    ['複製', '<path d="M3.500 1.500h7v7h-7z"/><path fill="#f0f0f0" d="M6.500 4.500h6v6h-6z"/>'],
    ['貼上', '<path fill="#f0f0f0" stroke="#666" d="M5.500 1.500h6v7h-6z"/><path fill="#666" stroke="#666" d="M3 4h5v6H3z"/><path fill="#888" stroke="none" d="M11 9h5l-2.500 3z"/>'],
    ['匯入', '<path fill="#000" d="M1 6h9v5H1z"/><path d="M1 5V2.500h5l1 2h4V8"/><path fill="#000" stroke="none" d="M8 4q1-3 4-2V0l4 3-4 4V5z"/>'],
    ['資訊', '<path stroke-width="2" d="M8 1v2M8 5v5M6 5h2M5 11h6"/>'],
    ['刪除', '<path d="M3 2.500h10M6.500 2V.5h3V2M4.500 4v7.500h7V4M6.500 5v4M9.500 5v4"/>']
  ];
  box.innerHTML = icons.map(([name, art]) =>
    `<button aria-label="${name}"><svg viewBox="0 0 16 12">${art}</svg></button>`).join('') +
    '<label class="search"><input aria-label="搜尋"><svg><use href="#lens"/></svg></label>';
});

const STEP = 4.13;
function drawRulers(svg) {
  svg.querySelector('.rulers')?.remove();
  const { width, height } = svg.getBoundingClientRect();
  const { vbase, vvalue, hvalue } = svg.dataset;
  const bottom = Math.round(height) - 14.5;
  let path = `M29.5 0V${height}M0 ${bottom}H${width}`;
  let nums = '';
  for (let i = -10; i < 100; i++) {
    const y = Math.round(+vbase + i * STEP) + .5;
    if (y > 0 && y < bottom) {
      const major = i % 10 === 0;
      path += `M29.5 ${y}h-${major ? 15 : i % 5 === 0 ? 7 : 3}`;
    }
    if (i % 10 === 0 && y > 0 && y < bottom) nums += `<text x="24" y="${y - 1}">${+vvalue - i / 5}</text>`;
  }
  for (let i = -5; i < 150; i++) {
    const x = Math.round(53 + i * STEP) + .5;
    if (x < 32 || x > width) continue;
    path += `M${x} ${bottom}v${i % 10 === 0 ? 15 : i % 5 === 0 ? 7 : 3}`;
  }
  for (let i = 0; i * STEP + 50 < width; i += 10) {
    nums += `<text x="${Math.round(52 + i * STEP)}" y="${bottom + 13}">${+hvalue + i / 5}</text>`;
  }
  svg.insertAdjacentHTML('beforeend', `<g class="rulers"><path class="ticks" d="${path}"/><g class="nums">${nums}</g></g>`);
}
const redraw = () => document.querySelectorAll('.canvas').forEach(drawRulers);
redraw();
addEventListener('resize', redraw);
```
